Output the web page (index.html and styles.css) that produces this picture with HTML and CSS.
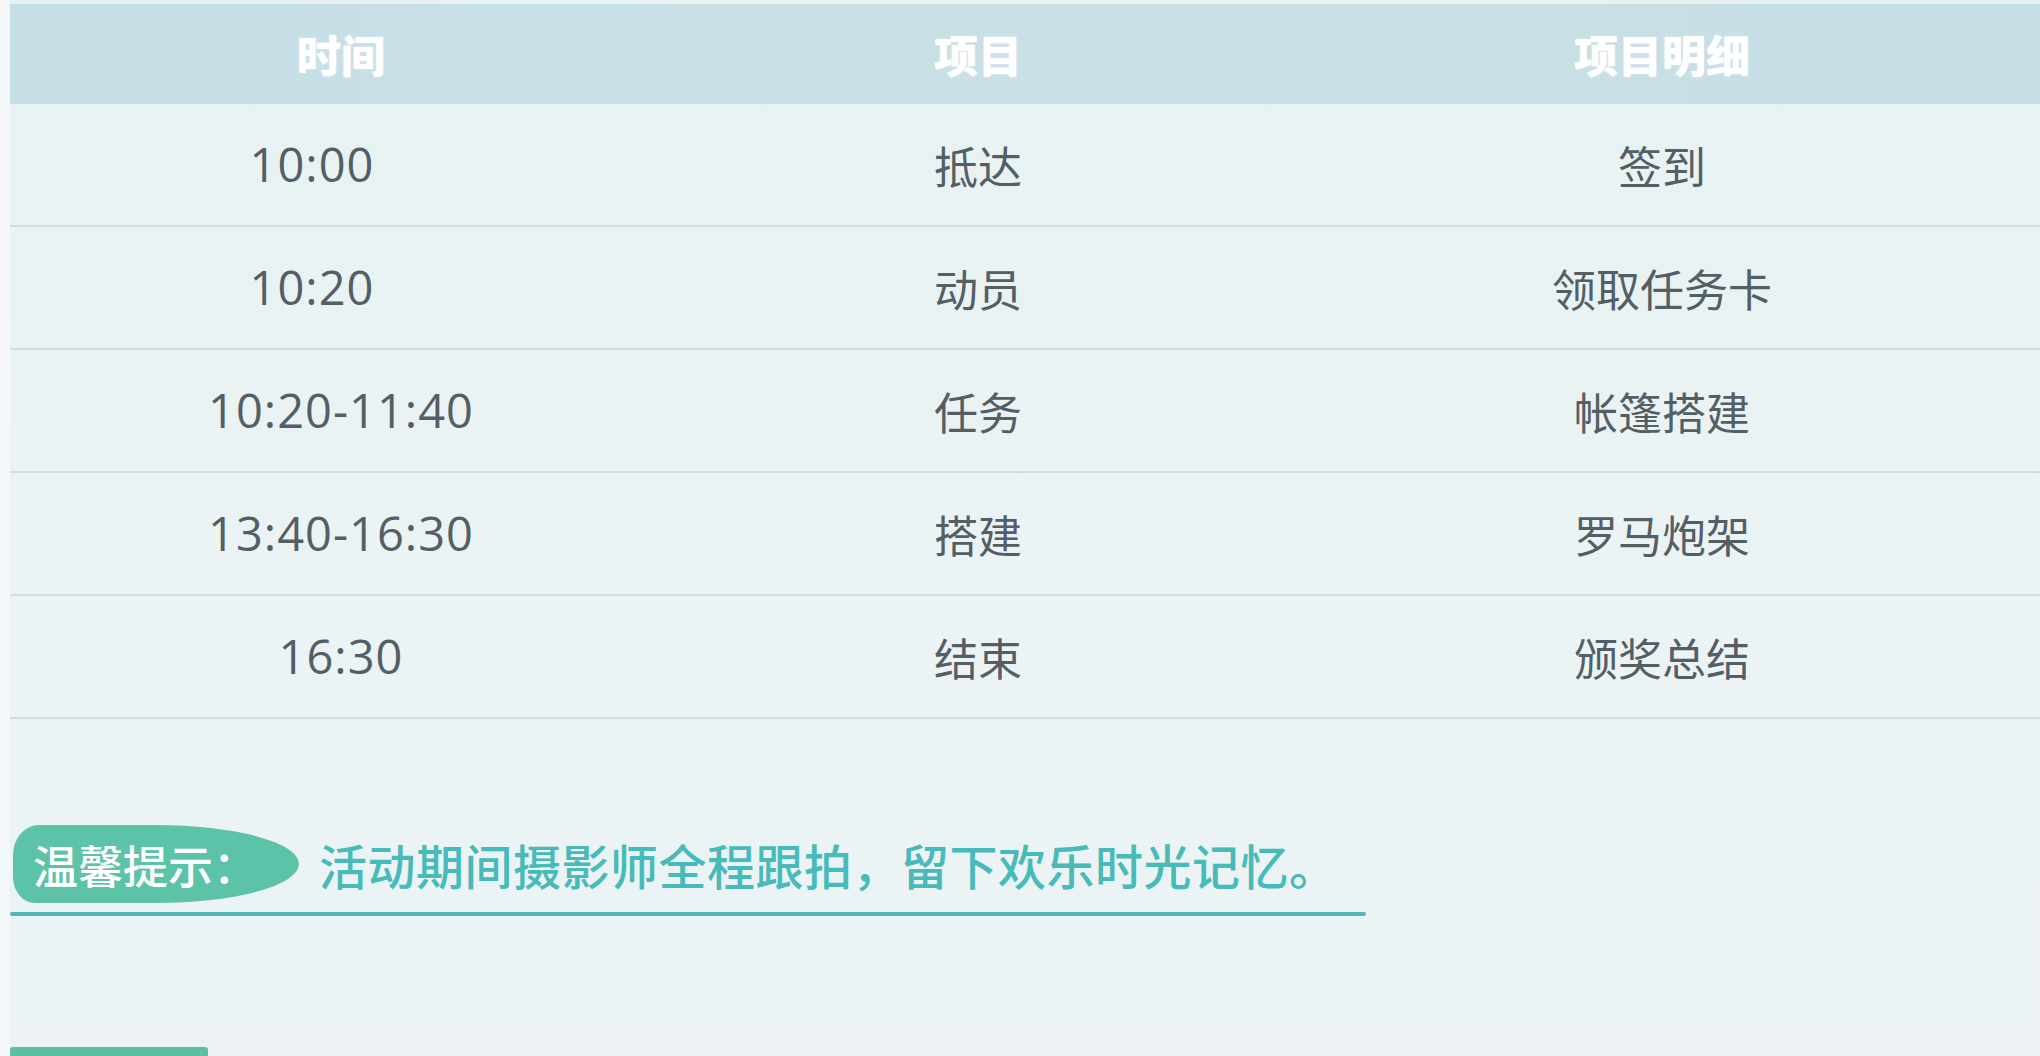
FILE: index.html
```html
<!DOCTYPE html>
<html lang="zh-CN">
<head>
<meta charset="utf-8">
<title>活动流程</title>
<link rel="stylesheet" href="styles.css">
</head>
<body>
<div class="page">
  <div class="sheet">
    <div class="schedule">
      <div class="row head">
        <div class="cell">时间</div>
        <div class="cell">项目</div>
        <div class="cell">项目明细</div>
      </div>
      <div class="row">
        <div class="cell num shift">10:00</div>
        <div class="cell">抵达</div>
        <div class="cell">签到</div>
      </div>
      <div class="row">
        <div class="cell num shift">10:20</div>
        <div class="cell">动员</div>
        <div class="cell">领取任务卡</div>
      </div>
      <div class="row">
        <div class="cell num">10:20-11:40</div>
        <div class="cell">任务</div>
        <div class="cell">帐篷搭建</div>
      </div>
      <div class="row">
        <div class="cell num">13:40-16:30</div>
        <div class="cell">搭建</div>
        <div class="cell">罗马炮架</div>
      </div>
      <div class="row">
        <div class="cell num">16:30</div>
        <div class="cell">结束</div>
        <div class="cell">颁奖总结</div>
      </div>
    </div>

    <div class="tip">
      <div class="tip-line">
        <span class="tip-badge">温馨提示：</span>
        <span class="tip-text">活动期间摄影师全程跟拍，留下欢乐时光记忆。</span>
      </div>
      <div class="tip-rule"></div>
    </div>

    <div class="foot-bar"></div>
  </div>
</div>
</body>
</html>
```

FILE: styles.css
```css
html, body {
  margin: 0;
  padding: 0;
}

body {
  width: 2040px;
  height: 1056px;
  overflow: hidden;
  background: #f6f9f9;
  font-family: "Noto Sans CJK SC", "Noto Sans", sans-serif;
}

.page {
  height: 1056px;
  padding-left: 10px;
  background: #f4f8f8;
}

.sheet {
  height: 1056px;
  display: flex;
  flex-direction: column;
  padding-top: 4px;
  box-sizing: border-box;
  background: linear-gradient(180deg, #e8f2f3 0%, #ebf3f4 60%, #edf3f4 100%);
}

.schedule {
  display: flex;
  flex-direction: column;
}

.row {
  display: grid;
  grid-template-columns: 662px 612px 1fr;
  height: 121px;
  border-bottom: 2px solid #cfdde1;
  align-items: center;
}

.row.head {
  height: 100px;
  border-bottom: none;
  background: linear-gradient(90deg, #c6dee6 0%, #c9e0e6 50%, #c6dee5 100%);
}

.cell {
  text-align: center;
  font-size: 44px;
  color: #545f65;
  line-height: 1;
}

.cell.num {
  font-family: "Open Sans", "Noto Sans", sans-serif;
  font-size: 47px;
  letter-spacing: 1px;
}

.cell.shift {
  padding-right: 58px;
}

.head .cell {
  color: #ffffff;
  font-weight: 900;
  font-size: 44px;
  text-shadow: 0 0 2px rgba(255, 255, 255, 0.6);
}

.tip {
  margin-top: 106px;
  display: flex;
  flex-direction: column;
}

.tip-line {
  display: flex;
  align-items: center;
  gap: 20px;
  padding-left: 3px;
}

.tip-badge {
  width: 286px;
  height: 78px;
  box-sizing: border-box;
  padding-left: 20px;
  display: flex;
  align-items: center;
  background: #5dc3a8;
  color: #ffffff;
  font-size: 45px;
  font-weight: 500;
  border-radius: 26px 50% 50% 22px / 30px 50% 50% 26px;
}

.tip-text {
  color: #47baba;
  font-size: 48px;
  font-weight: 500;
  letter-spacing: 0.5px;
}

.tip-rule {
  margin-top: 9px;
  width: 1356px;
  height: 4px;
  border-radius: 2px;
  background: #4db8b8;
}

.foot-bar {
  margin-top: auto;
  width: 198px;
  height: 9px;
  border-radius: 3px 3px 0 0;
  background: #5bbfa6;
}
```
